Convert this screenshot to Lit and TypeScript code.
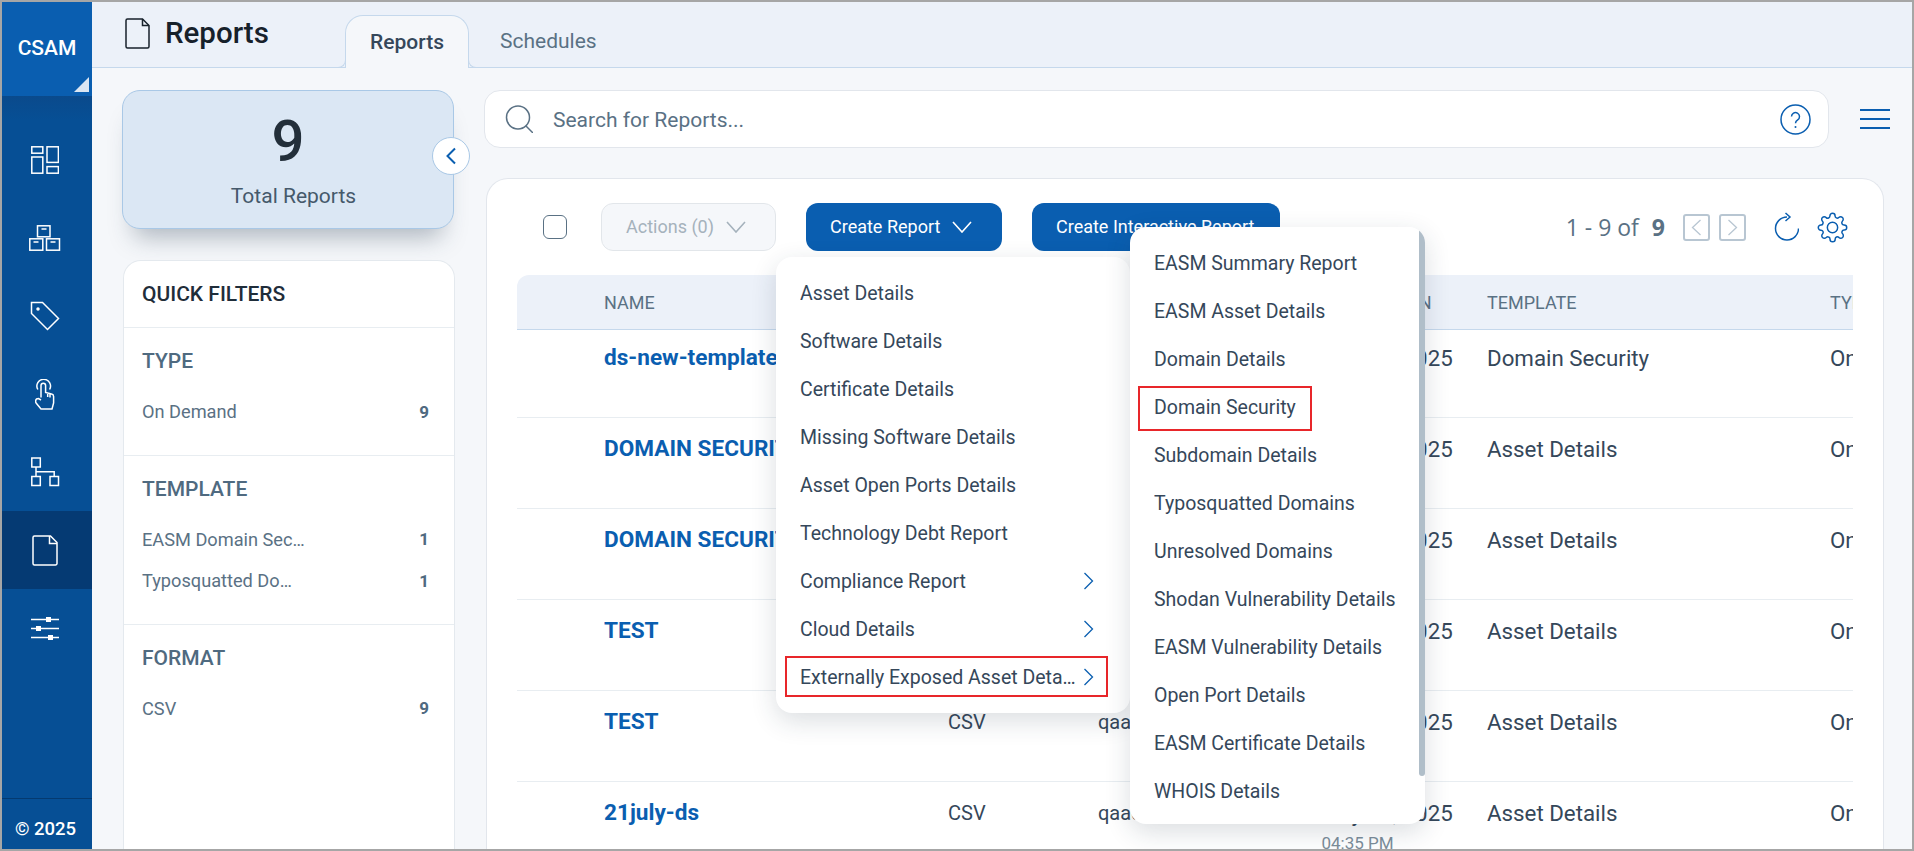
import { LitElement, html, css, svg } from "lit";
import { customElement } from "lit/decorators.js";

const navIcons = [
  svg`<svg width="28" height="28" viewBox="0 0 28 28"><rect x=".8" y=".8" width="11" height="6.4"/><rect x=".8" y="11" width="11" height="16.2"/><rect x="16" y=".8" width="11.4" height="15.6"/><rect x="16" y="20.6" width="11.4" height="6.6"/></svg>`,
  svg`<svg width="32" height="26" viewBox="0 0 32 26"><rect x="8.5" y=".8" width="12.5" height="11"/><rect x=".8" y="13.8" width="13" height="11.4"/><rect x="17.5" y="13.8" width="13" height="11.4"/><path d="M12.5 4h5M4.5 17h5M21.500 17h5"/></svg>`,
  svg`<svg width="30" height="30" viewBox="0 0 30 30"><path d="M1.500 1.500H12.500L28.500 17.500 17.500 28.500 1.500 12.500Z"/><circle cx="8" cy="8" r="1" fill="#fff"/></svg>`,
  svg`<svg width="20" height="31" viewBox="0 0 20 31"><path d="M2.800 10.500A6.800 6.800 0 1 1 14.600 10.500"/><path d="M6 18.500V6.500a2.300 2.300 0 0 1 4.600 0V13.500l6 1.500a2.500 2.500 0 0 1 2 2.500V24l-1.600 6H6l-4.500-5.500a3.500 3.500 0 0 1 0-4.500L3.500 19.500 6 21M12.700 14v4M15 14.500v4"/></svg>`,
  svg`<svg width="30" height="30" viewBox="0 0 30 30"><rect x="1.800" y="1" width="8.500" height="9"/><rect x="1.800" y="19.500" width="8.500" height="9"/><rect x="20" y="19.500" width="8.500" height="9"/><path d="M6 10V19.500M6 14.800H24.200V19.500"/></svg>`,
  svg`<svg width="26" height="31" viewBox="0 0 26 31"><path d="M2.500 1H18.500L25 7.500V28.500a1.500 1.500 0 0 1-1.500 1.500H2.500A1.500 1.500 0 0 1 1 28.500V2.500A1.500 1.500 0 0 1 2.500 1Z"/><path d="M17.500 1V8.500H25"/></svg>`,
  svg`<svg width="28" height="24" viewBox="0 0 28 24"><path d="M0 3.500H28M0 12.500H28M0 21.500H28"/><rect x="15" y="1" width="5" height="5" fill="#fff" stroke="none"/><rect x="5" y="10" width="5" height="5" fill="#fff" stroke="none"/><rect x="17" y="19" width="5" height="5" fill="#fff" stroke="none"/></svg>`,
];

const chevronDown = svg`<svg width="20" height="12" viewBox="0 0 20 12" fill="none" stroke="currentColor" stroke-width="1.600"><path d="M1 1l9 10 9-10"/></svg>`;
const chevronRight = svg`<svg width="11" height="18" viewBox="0 0 11 18" fill="none" stroke="#0a5eb0" stroke-width="1.300"><path d="M1.500 1l8 8-8 8"/></svg>`;

const rows = [
  ["ds-new-template", "CSV", "qaadmin", "Domain Security"],
  ["DOMAIN SECURITY REPORT", "CSV", "qaadmin", "Asset Details"],
  ["DOMAIN SECURITY REPORT", "CSV", "qaadmin", "Asset Details"],
  ["TEST", "CSV", "qaadmin", "Asset Details"],
  ["TEST", "CSV", "qaadmin", "Asset Details"],
  ["21july-ds", "CSV", "qaadmin", "Asset Details"],
];

const menuOne = ["Asset Details", "Software Details", "Certificate Details", "Missing Software Details", "Asset Open Ports Details", "Technology Debt Report"];
const menuTwo = ["EASM Summary Report", "EASM Asset Details", "Domain Details", "Domain Security", "Subdomain Details", "Typosquatted Domains", "Unresolved Domains", "Shodan Vulnerability Details", "EASM Vulnerability Details", "Open Port Details", "EASM Certificate Details", "WHOIS Details"];

@customElement("app-root")
export class AppRoot extends LitElement {
  static styles = css`
    :host {
      display: block;
      box-sizing: border-box;
      width: 1914px;
      height: 851px;
      border: 2px solid #a6a6a6;
      overflow: hidden;
      font-family: Roboto, "Liberation Sans", sans-serif;
      background: #f5f7fa;
      color: #35475a;
    }
    .shell { display: flex; height: 847px; }

    .side { width: 90px; flex: none; display: flex; flex-direction: column; background: #064f95; }
    .logo {
      position: relative;
      height: 94px;
      flex: none;
      background: #0a5eb0;
      color: #fff;
      font-size: 21px;
      font-weight: 500;
      display: flex;
      align-items: center;
      justify-content: center;
      padding-bottom: 2px;
      box-sizing: border-box;
    }
    .logo::after {
      content: "";
      position: absolute;
      right: 3px;
      bottom: 4px;
      border-style: solid;
      border-width: 0 0 15px 15px;
      border-color: transparent transparent #dbe6f3 transparent;
    }
    .nav { padding-top: 25px; flex: 1; background: linear-gradient(#0a4a8c, #064f95 24px); }
    .nav-item { height: 78px; display: flex; align-items: center; justify-content: center; padding-right: 4px; }
    .nav-item.active { background: #053a73; }
    .nav-item svg { fill: none; stroke: #fff; stroke-width: 1.500; }
    .copy {
      height: 51px;
      flex: none;
      box-sizing: border-box;
      border-top: 1px solid #043a70;
      color: #fff;
      font-size: 18.500px;
      font-weight: 500;
      display: flex;
      align-items: center;
      justify-content: center;
      padding: 9px 3px 0 0;
    }

    .main { flex: 1; min-width: 0; display: flex; flex-direction: column; }
    .top {
      height: 66px;
      flex: none;
      box-sizing: border-box;
      background: #ecf1f9;
      border-bottom: 1px solid #c5d8ec;
      display: flex;
      align-items: flex-end;
      padding-left: 33px;
    }
    .title { align-self: flex-start; margin-top: 13px; display: flex; align-items: center; gap: 15px; width: 220px; font-size: 29.500px; line-height: 36px; font-weight: 500; color: #17212b; }
    .tab {
      position: relative;
      box-sizing: border-box;
      height: 53px;
      width: 124px;
      margin-bottom: -1px;
      background: #f5f7fa;
      border: 1px solid #c5d8ec;
      border-bottom: none;
      border-radius: 18px 18px 0 0;
      display: flex;
      align-items: center;
      justify-content: center;
      font-size: 21px;
      font-weight: 500;
      color: #35475a;
    }
    .tab::before, .tab::after {
      content: "";
      position: absolute;
      bottom: 0;
      width: 8px;
      height: 8px;
      border-bottom: 1px solid #c5d8ec;
    }
    .tab::before { left: -9px; border-right: 1px solid #c5d8ec; border-bottom-right-radius: 8px; }
    .tab::after { right: -9px; border-left: 1px solid #c5d8ec; border-bottom-left-radius: 8px; }
    .tab-plain { align-self: flex-start; margin: 24px 0 0 31px; font-size: 21px; line-height: 30px; color: #5a7184; }

    .body { flex: 1; min-height: 0; display: flex; padding: 22px 0 0 30px; gap: 29px; }
    .left { position: relative; width: 333px; flex: none; display: flex; flex-direction: column; }
    .total {
      box-sizing: border-box;
      width: 332px;
      height: 139px;
      flex: none;
      background: #dbe7f4;
      border: 1px solid #a9c8e6;
      border-radius: 18px;
      box-shadow: 0 20px 24px -12px rgba(40, 60, 80, 0.35);
      display: flex;
      flex-direction: column;
      align-items: center;
      color: #232f3a;
    }
    .total b { font-size: 58px; line-height: 68px; font-weight: 500; margin-top: 16px; }
    .total span { font-size: 21px; line-height: 26px; color: #45596b; margin-top: 8px; padding-left: 11px; }
    .collapse {
      position: absolute;
      left: 310px;
      top: 47px;
      box-sizing: border-box;
      width: 38px;
      height: 38px;
      border-radius: 50%;
      background: #fff;
      border: 1px solid #a9c8e6;
      display: flex;
      align-items: center;
      justify-content: center;
    }
    .filters {
      flex: 1;
      margin: 31px 0 0 1px;
      background: #fff;
      border: 1px solid #e4e9ee;
      border-bottom: none;
      border-radius: 18px 18px 0 0;
    }
    .filters h3 {
      margin: 0;
      height: 67px;
      box-sizing: border-box;
      padding: 20px 0 0 18px;
      font-size: 21px;
      line-height: 26px;
      font-weight: 500;
      color: #1f2d3a;
      border-bottom: 1px solid #e8edf1;
    }
    .group { padding: 20px 25px 22px 18px; border-bottom: 1px solid #e8edf1; }
    .group:last-child { border-bottom: none; }
    .group h4 { margin: 0 0 17px; font-size: 21px; line-height: 26px; font-weight: 500; color: #4f6a80; }
    .filter-row { height: 41.500px; display: flex; align-items: center; justify-content: space-between; font-size: 18.200px; color: #5a7184; }
    .filter-row b { font-weight: 700; color: #4f6a80; font-size: 17px; }

    .right { flex: 1; min-width: 0; display: flex; flex-direction: column; }
    .search-row { display: flex; align-items: center; flex: none; padding-right: 22px; gap: 31px; }
    .search {
      flex: 1;
      height: 58px;
      box-sizing: border-box;
      background: #fff;
      border: 1px solid #e2e6ec;
      border-radius: 16px;
      display: flex;
      align-items: center;
      padding: 0 17px 0 20px;
      font-size: 21px;
      color: #5a7184;
    }
    .search span { flex: 1; margin-left: 20px; padding-top: 1px; }
    .burger { width: 30px; display: flex; flex-direction: column; gap: 7.500px; }
    .burger i { display: block; height: 1.500px; background: #0a5eb0; }

    .card {
      position: relative;
      flex: 1;
      min-height: 0;
      margin: 30px 28px 0 2px;
      background: #fff;
      border: 1px solid #e2e6ec;
      border-bottom: none;
      border-radius: 22px 22px 0 0;
      overflow: hidden;
    }
    .tools { display: flex; align-items: center; height: 48px; margin-top: 24px; padding: 0 35px 0 56px; }
    .check { box-sizing: border-box; width: 24px; height: 24px; border: 1.500px solid #5a7184; border-radius: 6px; flex: none; }
    .btn {
      box-sizing: border-box;
      height: 48px;
      border-radius: 12px;
      display: flex;
      align-items: center;
      gap: 12px;
      padding: 0 0 1px 24px;
      font-size: 18px;
      flex: none;
      white-space: nowrap;
    }
    .btn.off { width: 175px; margin-left: 34px; background: #f5f7fa; border: 1px solid #e2e6ea; color: #a5b2bc; }
    .btn.on { background: #0a5eb0; color: #fff; margin-left: 30px; }
    .count { margin-left: auto; font-size: 23px; color: #5a7184; font-family: "Open Sans", Roboto, sans-serif; }
    .count b { margin-left: 7px; }
    .pg { box-sizing: border-box; width: 27px; height: 27px; border: 2px solid #b8c6d2; border-radius: 3px; display: flex; align-items: center; justify-content: center; flex: none; margin-left: 9px; }
    .pg.first { margin-left: 18px; }
    .refresh { margin-left: 28px; flex: none; }
    .gear { margin-left: 18px; flex: none; }

    .grid { margin: 24px 30px 0 30px; overflow: hidden; }
    .line { display: grid; grid-template-columns: 87px 344px 150px 223.500px 165.500px 343px 200px; width: 1513px; }
    .head { height: 55px; box-sizing: border-box; background: #ecf1f9; border-bottom: 1px solid #c5d8ec; align-items: center; font-size: 18px; color: #5a7184; border-radius: 12px 0 0 0; }
    .head .created { padding-left: 4px; }
    .row { height: 91px; box-sizing: border-box; border-bottom: 1px solid #e8edf1; padding-top: 19px; font-size: 22.300px; line-height: 24px; color: #35475a; }
    .row.first { height: 88px; padding-top: 16px; }
    .name { font-weight: 700; font-size: 22.600px; color: #0a5eb0; white-space: nowrap; overflow: hidden; }
    .small { font-size: 20px; }
    .time { display: block; margin-top: 6px; font-size: 17px; color: #7c8d9a; }

    .menu {
      position: absolute;
      box-sizing: border-box;
      background: #fff;
      border-radius: 16px;
      padding: 12px 0;
      box-shadow: 0 8px 26px rgba(30, 50, 70, 0.16);
      font-size: 19.500px;
      color: #35475a;
      overflow: hidden;
    }
    .menu.one { left: 289px; top: 78px; width: 354px; height: 456px; }
    .menu.two { left: 643px; top: 48px; width: 295px; height: 597px; }
    .item { position: relative; height: 48px; display: flex; align-items: center; padding-left: 24px; }
    .item .label { flex: 1; min-width: 0; white-space: nowrap; overflow: hidden; text-overflow: ellipsis; }
    .item svg { flex: none; margin: 0 36px 0 4px; }
    .mark { position: absolute; box-sizing: border-box; border: 2px solid #e8262a; pointer-events: none; }
    .mark.a { left: 9px; top: 3px; width: 323px; height: 41px; }
    .mark.b { left: 8px; top: 3px; width: 174px; height: 45px; }
    .thumb { position: absolute; right: 0; top: 0; width: 6px; height: 549px; background: #b0bec9; border-radius: 3px; }
  `;

  render() {
    return html`
      <div class="shell">
        <aside class="side">
          <div class="logo">CSAM</div>
          <div class="nav">
            ${navIcons.map((icon, i) => html`<div class="nav-item ${i === 5 ? "active" : ""}">${icon}</div>`)}
          </div>
          <div class="copy">© 2025</div>
        </aside>
        <div class="main">
          <div class="top">
            <div class="title">
              <svg width="25" height="31" viewBox="0 0 25 31" fill="none" stroke="#17212b" stroke-width="1.500"><path d="M2.500 1H17.500L24 7.500V28.500a1.500 1.500 0 0 1-1.500 1.500H2.500A1.500 1.500 0 0 1 1 28.500V2.500A1.500 1.500 0 0 1 2.500 1Z"/><path d="M17.500 1V7.500H24"/></svg>
              Reports
            </div>
            <div class="tab">Reports</div>
            <div class="tab-plain">Schedules</div>
          </div>
          <div class="body">
            <div class="left">
              <div class="total"><b>9</b><span>Total Reports</span></div>
              <div class="collapse">
                <svg width="12" height="18" viewBox="0 0 12 18" fill="none" stroke="#0a5eb0" stroke-width="2"><path d="M10 1.500L2.500 9l7.500 7.500"/></svg>
              </div>
              <div class="filters">
                <h3>QUICK FILTERS</h3>
                <div class="group">
                  <h4>TYPE</h4>
                  <div class="filter-row"><span>On Demand</span><b>9</b></div>
                </div>
                <div class="group">
                  <h4>TEMPLATE</h4>
                  <div class="filter-row"><span>EASM Domain Sec…</span><b>1</b></div>
                  <div class="filter-row"><span>Typosquatted Do…</span><b>1</b></div>
                </div>
                <div class="group">
                  <h4>FORMAT</h4>
                  <div class="filter-row"><span>CSV</span><b>9</b></div>
                </div>
              </div>
            </div>
            <div class="right">
              <div class="search-row">
                <div class="search">
                  <svg width="28" height="28" viewBox="0 0 28 28" fill="none" stroke="#5a7184" stroke-width="1.500"><circle cx="13" cy="12.500" r="11.500"/><path d="M21 21l7 7"/></svg>
                  <span>Search for Reports...</span>
                  <svg width="31" height="31" viewBox="0 0 31 31" fill="none" stroke="#0a5eb0" stroke-width="1.500"><circle cx="15.500" cy="15.500" r="14.500"/><path d="M11.500 12.500a4 4 0 1 1 6.200 3.400c-1.500 1-2.200 1.800-2.200 3.300"/><circle cx="15.500" cy="23" r="1" fill="#0a5eb0" stroke="none"/></svg>
                </div>
                <div class="burger"><i></i><i></i><i></i></div>
              </div>
              <div class="card">
                <div class="tools">
                  <div class="check"></div>
                  <div class="btn off">Actions (0) ${chevronDown}</div>
                  <div class="btn on" style="width:196px">Create Report ${chevronDown}</div>
                  <div class="btn on" style="width:248px">Create Interactive Report</div>
                  <div class="count">1 - 9 of <b>9</b></div>
                  <div class="pg first">
                    <svg width="11" height="17" viewBox="0 0 11 17" fill="none" stroke="#b8c6d2" stroke-width="1.300"><path d="M9.500 1l-8 7.500 8 7.500"/></svg>
                  </div>
                  <div class="pg">
                    <svg width="11" height="17" viewBox="0 0 11 17" fill="none" stroke="#b8c6d2" stroke-width="1.300"><path d="M1.500 1l8 7.500-8 7.500"/></svg>
                  </div>
                  <svg class="refresh" width="25" height="30" viewBox="0 0 25 30" fill="none" stroke="#0a5eb0" stroke-width="1.500"><path d="M13 5A11.500 11.500 0 1 0 24.500 16.500"/><path d="M11.500 1L16 5l-4.500 4"/></svg>
                  <svg class="gear" width="31" height="31" viewBox="0 0 24 24" fill="none" stroke="#0a5eb0" stroke-width="1.150"><circle cx="12" cy="12" r="4"/><path d="M19.400 15a1.650 1.650 0 0 0 .33 1.820l.06.06a2 2 0 0 1 0 2.830 2 2 0 0 1-2.830 0l-.06-.06a1.650 1.650 0 0 0-1.820-.33 1.650 1.650 0 0 0-1 1.510V21a2 2 0 0 1-2 2 2 2 0 0 1-2-2v-.09A1.650 1.650 0 0 0 9 19.400a1.650 1.650 0 0 0-1.820.33l-.06.06a2 2 0 0 1-2.830 0 2 2 0 0 1 0-2.830l.06-.06a1.650 1.650 0 0 0 .33-1.820 1.650 1.650 0 0 0-1.510-1H3a2 2 0 0 1-2-2 2 2 0 0 1 2-2h.09A1.650 1.650 0 0 0 4.600 9a1.650 1.650 0 0 0-.33-1.820l-.06-.06a2 2 0 0 1 0-2.830 2 2 0 0 1 2.830 0l.06.06a1.650 1.650 0 0 0 1.820.33H9a1.650 1.650 0 0 0 1-1.510V3a2 2 0 0 1 2-2 2 2 0 0 1 2 2v.09a1.650 1.650 0 0 0 1 1.510 1.650 1.650 0 0 0 1.820-.33l.06-.06a2 2 0 0 1 2.830 0 2 2 0 0 1 0 2.830l-.06.06a1.650 1.650 0 0 0-.33 1.820V9a1.650 1.650 0 0 0 1.510 1H21a2 2 0 0 1 2 2 2 2 0 0 1-2 2h-.09a1.650 1.650 0 0 0-1.510 1z"/></svg>
                </div>
                <div class="grid">
                  <div class="line head">
                    <span></span><span>NAME</span><span>FORMAT</span><span>OWNER</span><span class="created">CREATED ON</span><span>TEMPLATE</span><span>TYPE</span>
                  </div>
                  ${rows.map(
                    (r, i) => html`
                      <div class="line row ${i === 0 ? "first" : ""}">
                        <span></span>
                        <span class="name">${r[0]}</span>
                        <span class="small">${r[1]}</span>
                        <span class="small">${r[2]}</span>
                        <span>July 21, 2025<span class="time">04:35 PM</span></span>
                        <span>${r[3]}</span>
                        <span>On Demand</span>
                      </div>
                    `
                  )}
                </div>
                <div class="menu one">
                  ${menuOne.map((m) => html`<div class="item"><span class="label">${m}</span></div>`)}
                  <div class="item"><span class="label">Compliance Report</span>${chevronRight}</div>
                  <div class="item"><span class="label">Cloud Details</span>${chevronRight}</div>
                  <div class="item"><span class="label">Externally Exposed Asset Details</span>${chevronRight}<div class="mark a"></div></div>
                </div>
                <div class="menu two">
                  ${menuTwo.map(
                    (m) => html`<div class="item"><span class="label">${m}</span>${m === "Domain Security" ? html`<div class="mark b"></div>` : ""}</div>`
                  )}
                  <div class="thumb"></div>
                </div>
              </div>
            </div>
          </div>
        </div>
      </div>
    `;
  }
}
